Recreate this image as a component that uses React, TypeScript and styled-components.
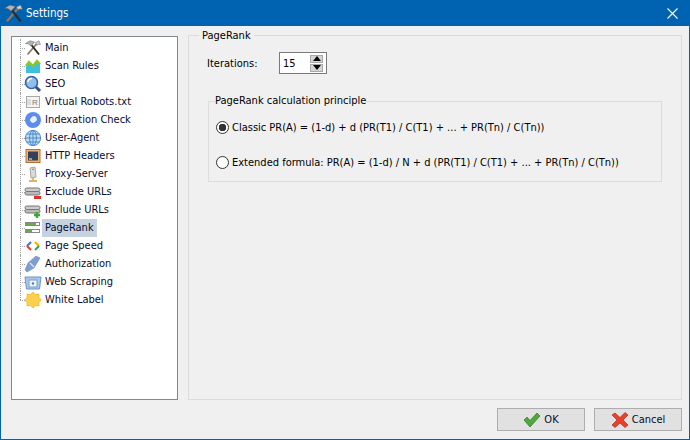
import React from "react"
import styled, { createGlobalStyle } from "styled-components"

const Global = createGlobalStyle`
  html, body { margin: 0; padding: 0; background: #f0f0f0; }
  body { font-family: "DejaVu Sans", "Noto Sans", sans-serif; font-stretch: condensed; font-size: 11px; color: #000; }
`

const Win = styled.div`
  width: 690px;
  height: 440px;
  box-sizing: border-box;
  border: 1px solid #0063b1;
  border-top: none;
  display: flex;
  flex-direction: column;
  background: #f0f0f0;
  overflow: hidden;
`

const TitleBar = styled.div`
  height: 26px;
  flex: none;
  background: #0063b1;
  color: #fff;
  display: flex;
  align-items: center;
  padding: 0 11px 0 3px;
  gap: 3px;
  font-size: 11.5px;
`

const TitleText = styled.span`
  flex: 1;
`

const Body = styled.div`
  flex: 1;
  display: flex;
  gap: 10px;
  padding: 2px 9px 0 10px;
  min-height: 0;
`

const Tree = styled.ul`
  list-style: none;
  margin: 8px 0 0;
  padding: 2px 0 0 10px;
  width: 167px;
  height: 364px;
  box-sizing: border-box;
  flex: none;
  background: #fff;
  border: 1px solid #828790;
`

const TreeRow = styled.li<{ $last?: boolean }>`
  height: 18px;
  display: flex;
  align-items: center;
  padding-left: 2px;
  position: relative;
  &::before {
    content: "";
    position: absolute;
    left: -2px;
    top: 0;
    height: ${({ $last }) => ($last ? "9px" : "18px")};
    border-left: 1px dotted #a0a0a0;
  }
  &::after {
    content: "";
    position: absolute;
    left: -2px;
    top: 9px;
    width: 5px;
    border-top: 1px dotted #a0a0a0;
  }
`

const TreeLabel = styled.span<{ $selected?: boolean }>`
  height: 18px;
  line-height: 17px;
  padding: 0 3px;
  color: #0a0a2a;
  background: ${({ $selected }) => ($selected ? "#c5d3e0" : "transparent")};
`

const IconBox = styled.span`
  width: 18px;
  height: 18px;
  flex: none;
  display: flex;
  align-items: center;
  justify-content: center;
`

const PageGroup = styled.fieldset`
  margin: 0;
  width: 492px;
  height: 372px;
  box-sizing: border-box;
  border: 1px solid #dcdcdc;
  padding: 9px 19px 0 18px;
`

const PageLegend = styled.legend`
  margin-left: -8px;
  padding: 0 3px;
  line-height: 15px;
`

const IterRow = styled.div`
  display: flex;
  align-items: center;
  height: 22px;
`

const IterLabel = styled.span`
  width: 72px;
  flex: none;
`

const Spinner = styled.div`
  width: 48px;
  height: 22px;
  box-sizing: border-box;
  border: 1px solid #7a7a7a;
  background: #fff;
  display: flex;
  align-items: center;
  justify-content: space-between;
  padding: 0 3px 0 3px;
`

const SpinButtons = styled.div`
  display: flex;
  flex-direction: column;
  gap: 1px;
`

const SpinButton = styled.span`
  width: 13px;
  height: 8px;
  background: #d4d4d4;
  border: 1px solid #a8a8a8;
  box-sizing: border-box;
  display: flex;
  align-items: center;
  justify-content: center;
`

const Principle = styled.fieldset`
  margin: 20px 0 0 1px;
  width: 454px;
  height: 88px;
  box-sizing: border-box;
  border: 1px solid #dcdcdc;
  padding: 9px 7px 0 7px;
  display: flex;
  flex-direction: column;
`

const PrincipleLegend = styled.legend`
  margin-left: -1px;
  padding: 0;
  line-height: 14px;
`

const RadioRow = styled.div`
  height: 20px;
  flex: none;
  display: flex;
  align-items: center;
  gap: 3px;
  margin-bottom: 15px;
`

const Radio = styled.span<{ $on?: boolean }>`
  width: 13px;
  height: 13px;
  flex: none;
  box-sizing: border-box;
  border-radius: 50%;
  border: 1px solid #333;
  background: ${({ $on }) => ($on ? "radial-gradient(circle, #333 0 3.5px, #fff 4px)" : "#fff")};
`

const Footer = styled.div`
  height: 39px;
  flex: none;
  display: flex;
  justify-content: flex-end;
  gap: 9px;
  padding: 8px 7px 0 0;
  box-sizing: border-box;
`

const Button = styled.div`
  width: 88px;
  height: 23px;
  box-sizing: border-box;
  background: #e1e1e1;
  border: 1px solid #adadad;
  display: flex;
  align-items: center;
  justify-content: center;
  gap: 3px;
  color: #0a0a2a;
`

const Hammer = ({ size = 16 }: { size?: number }) => (
  <svg width={size} height={size} viewBox="0 0 16 16">
    <path d="M2.5 14.5 L11.5 4" stroke="#8a7a68" strokeWidth="1.8" />
    <path d="M14 14.5 L6 4.5" stroke="#2e2e2e" strokeWidth="2" />
    <path d="M.5 3.5 L5 .8 L9.5 2 L6 6 L3.5 4 Z" fill="#b4b4b4" stroke="#5c5c5c" strokeWidth=".5" />
    <path d="M10.5 2.5 L14 .8 L15.5 4.5 L12.5 4.2 L12 5.5 Z" fill="#d0d0d0" stroke="#6a6a6a" strokeWidth=".5" />
  </svg>
)

const ScanRules = () => (
  <svg width="16" height="16" viewBox="0 0 16 16">
    <path d="M1 15 V7 L4 4 L8 8 L12 3 L15 6 V15 Z" fill="#3cc0e0" />
    <path d="M1 8 L4 4 L8 8 L12 3 L15 6" fill="none" stroke="#8cc820" strokeWidth="2.4" />
  </svg>
)

const Seo = () => (
  <svg width="18" height="18" viewBox="0 0 18 18">
    <path d="M11 11 L16 16" stroke="#33508a" strokeWidth="3" />
    <circle cx="7.5" cy="7.5" r="6" fill="#8fc0ec" stroke="#3a62a8" strokeWidth="1.6" />
    <path d="M4 7 A4 4 0 0 1 8 3.5" stroke="#fff" strokeWidth="1.5" fill="none" />
  </svg>
)

const Robots = () => (
  <svg width="16" height="16" viewBox="0 0 16 16">
    <rect x="1.5" y="2.5" width="13" height="11" fill="#f4f4f4" stroke="#a8a8a8" />
    <path d="M3 5 V11 M5 5 V11" stroke="#c4c4c4" />
    <text x="7" y="11" fontSize="8" fontFamily="Liberation Sans" fill="#777">R</text>
  </svg>
)

const Indexation = () => (
  <svg width="18" height="18" viewBox="0 0 18 18">
    <circle cx="9" cy="9" r="8" fill="#5d8cf0" />
    <ellipse cx="9.5" cy="8.5" rx="3.5" ry="3" fill="#e8f0ff" transform="rotate(-40 9.5 8.5)" />
  </svg>
)

const Globe = () => (
  <svg width="18" height="18" viewBox="0 0 18 18" fill="none" stroke="#3f7fc4" strokeWidth=".9">
    <circle cx="9" cy="9" r="7.6" fill="#bfe0f7" />
    <ellipse cx="9" cy="9" rx="3.4" ry="7.6" />
    <path d="M1.5 9 H16.5 M2.6 5 H15.4 M2.6 13 H15.4 M9 1.4 V16.6" />
  </svg>
)

const Http = () => (
  <svg width="16" height="16" viewBox="0 0 16 16">
    <rect x="1" y="1.5" width="14" height="13" fill="#e9b27a" stroke="#b9702d" />
    <rect x="3" y="3.5" width="10" height="9" fill="#33405a" />
    <path d="M4 11 H7" stroke="#fff" />
  </svg>
)

const Proxy = () => (
  <svg width="16" height="16" viewBox="0 0 16 16">
    <path d="M5 2 L10 1 L11 11 L6 12 Z" fill="#d9d9d9" stroke="#a9a9a9" />
    <path d="M8 12 V14 M4 15 H12" stroke="#d89a3a" strokeWidth="1.4" />
    <path d="M7 3.5 L9 3" stroke="#888" />
  </svg>
)

const Link = ({ add }: { add?: boolean }) => (
  <svg width="18" height="16" viewBox="0 0 18 16">
    <rect x="1" y="4" width="15" height="3.5" rx="1.7" fill="#ccc" stroke="#777" />
    <rect x="1" y="7.5" width="15" height="3.5" rx="1.7" fill="#bbb" stroke="#777" />
    {add ? (
      <path d="M13 10 V16 M10 13 H16" stroke="#38a838" strokeWidth="2.4" />
    ) : (
      <rect x="10" y="12" width="7" height="3" fill="#d93030" />
    )}
  </svg>
)

const Rank = () => (
  <svg width="16" height="14" viewBox="0 0 16 14">
    <rect x=".5" y="1.5" width="14" height="3" fill="#fff" stroke="#888" />
    <rect x="1" y="2" width="10" height="2" fill="#6aa84f" />
    <rect x=".5" y="8.5" width="14" height="3" fill="#fff" stroke="#888" />
    <rect x="1" y="9" width="6" height="2" fill="#6aa84f" />
  </svg>
)

const Speed = () => (
  <svg width="16" height="12" viewBox="0 0 16 12" fill="none" strokeWidth="2.2">
    <path d="M6 2 L2 6" stroke="#3b78e7" />
    <path d="M2 6 L6 10" stroke="#e04030" />
    <path d="M10 2 L14 6" stroke="#f2b400" />
    <path d="M14 6 L10 10" stroke="#36a852" />
  </svg>
)

const Auth = () => (
  <svg width="18" height="18" viewBox="0 0 18 18">
    <path d="M1 15 L4 8 L12 1 L16 3 L10 13 L3 17 Z" fill="#7f9fd0" stroke="#5a7cb4" strokeWidth=".5" />
    <path d="M6 8 L10 12" stroke="#dfe8f5" strokeWidth="1.2" />
  </svg>
)

const Scraping = () => (
  <svg width="18" height="16" viewBox="0 0 18 16">
    <path d="M1 3 H17 L15.5 15 H2.5 Z" fill="#a8c8ea" stroke="#6d95c4" />
    <rect x="5" y="6" width="8" height="7" fill="#eef5fc" stroke="#7aa0cc" />
    <circle cx="9" cy="9.5" r="1.2" fill="#4f7fbf" />
  </svg>
)

const Star = () => (
  <svg width="18" height="18" viewBox="0 0 18 18">
    <path
      d="M9 1 L11.5 3.5 L15 3 L15 6.5 L17.5 9 L15 11.5 L15 15 L11.5 14.5 L9 17 L6.5 14.5 L3 15 L3 11.5 L.5 9 L3 6.5 L3 3 L6.5 3.5 Z"
      fill="#fbd04a"
      stroke="#e8a820"
      strokeWidth=".6"
    />
  </svg>
)

const Check = () => (
  <svg width="18" height="16" viewBox="0 0 18 16">
    <path d="M1 8 L4 5 L7 8.5 L14 1 L17 4 L7 15 Z" fill="#4fa83a" stroke="#2f7a24" strokeWidth=".7" />
  </svg>
)

const Cross = () => (
  <svg width="18" height="16" viewBox="0 0 18 16">
    <path
      d="M1 3 L4 1 L9 5.5 L14 .5 L17 3 L12 8 L17 13 L14 15.5 L9 11 L4 15.5 L1 13 L6 8 Z"
      fill="#e8402a"
      stroke="#b82a1a"
      strokeWidth=".7"
    />
  </svg>
)

const items: { label: string; icon: React.ReactNode }[] = [
  { label: "Main", icon: <Hammer /> },
  { label: "Scan Rules", icon: <ScanRules /> },
  { label: "SEO", icon: <Seo /> },
  { label: "Virtual Robots.txt", icon: <Robots /> },
  { label: "Indexation Check", icon: <Indexation /> },
  { label: "User-Agent", icon: <Globe /> },
  { label: "HTTP Headers", icon: <Http /> },
  { label: "Proxy-Server", icon: <Proxy /> },
  { label: "Exclude URLs", icon: <Link /> },
  { label: "Include URLs", icon: <Link add /> },
  { label: "PageRank", icon: <Rank /> },
  { label: "Page Speed", icon: <Speed /> },
  { label: "Authorization", icon: <Auth /> },
  { label: "Web Scraping", icon: <Scraping /> },
  { label: "White Label", icon: <Star /> },
]

export default function App() {
  return (
    <Win>
      <Global />
      <TitleBar>
        <Hammer size={19} />
        <TitleText>Settings</TitleText>
        <svg width="11" height="11" viewBox="0 0 11 11">
          <path d="M.5 .5 L10.5 10.5 M10.5 .5 L.5 10.5" stroke="#fff" strokeWidth="1.1" />
        </svg>
      </TitleBar>
      <Body>
        <Tree>
          {items.map((item, i) => (
            <TreeRow key={item.label} $last={i === items.length - 1}>
              <IconBox>{item.icon}</IconBox>
              <TreeLabel $selected={item.label === "PageRank"}>{item.label}</TreeLabel>
            </TreeRow>
          ))}
        </Tree>
        <PageGroup>
          <PageLegend>PageRank</PageLegend>
          <IterRow>
            <IterLabel>Iterations:</IterLabel>
            <Spinner>
              <span>15</span>
              <SpinButtons>
                <SpinButton>
                  <svg width="8" height="5" viewBox="0 0 8 5"><path d="M4 0 L8 5 H0 Z" fill="#000" /></svg>
                </SpinButton>
                <SpinButton>
                  <svg width="8" height="5" viewBox="0 0 8 5"><path d="M0 0 H8 L4 5 Z" fill="#000" /></svg>
                </SpinButton>
              </SpinButtons>
            </Spinner>
          </IterRow>
          <Principle>
            <PrincipleLegend>PageRank calculation principle</PrincipleLegend>
            <RadioRow>
              <Radio $on />
              <span>Classic PR(A) = (1-d) + d (PR(T1) / C(T1) + ... + PR(Tn) / C(Tn))</span>
            </RadioRow>
            <RadioRow>
              <Radio />
              <span>Extended formula: PR(A) = (1-d) / N + d (PR(T1) / C(T1) + ... + PR(Tn) / C(Tn))</span>
            </RadioRow>
          </Principle>
        </PageGroup>
      </Body>
      <Footer>
        <Button><Check />OK</Button>
        <Button><Cross />Cancel</Button>
      </Footer>
    </Win>
  )
}
